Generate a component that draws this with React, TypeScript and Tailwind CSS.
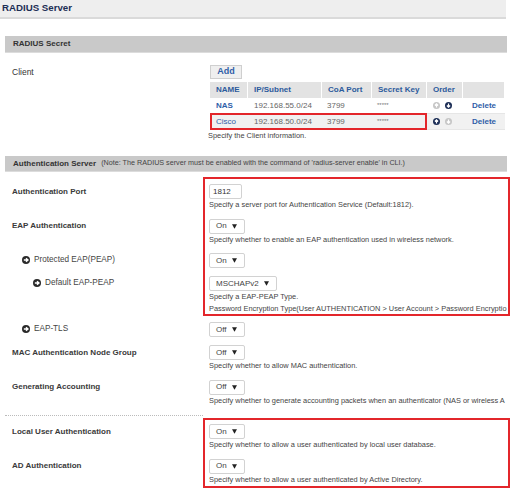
import React from "react";

type Dir = "up" | "down" | "right";

function CircleArrow({ dir, color, size = 7 }: { dir: Dir; color: string; size?: number }) {
  const d =
    dir === "down"
      ? "M5 2.2V7.4M2.7 5L5 7.4L7.3 5"
      : dir === "up"
      ? "M5 7.8V2.6M2.7 5L5 2.6L7.3 5"
      : "M2.3 5H7.5M5 2.7L7.5 5L5 7.3";
  return (
    <svg width={size} height={size} viewBox="0 0 10 10" className="shrink-0">
      <circle cx="5" cy="5" r="5" fill={color} />
      <path d={d} stroke="#fff" strokeWidth="1.7" fill="none" />
    </svg>
  );
}

function Caret() {
  return (
    <svg width="5" height="5" viewBox="0 0 10 9">
      <path d="M0 0H10L5 9Z" fill="#222" />
    </svg>
  );
}

function Select({ value, wide }: { value: string; wide?: boolean }) {
  return (
    <div
      className={`flex h-[15px] items-center justify-between rounded-[2px] border border-[#d2d2d2] bg-white pl-[6px] pr-[7px] text-[8px] text-[#444] ${
        wide ? "w-[68px]" : "w-[36px]"
      }`}
    >
      <span>{value}</span>
      <Caret />
    </div>
  );
}

type RowDef = {
  label: React.ReactNode;
  control: React.ReactNode;
  desc?: string[];
  rowCls: string;
};

function MainLabel({ text }: { text: string }) {
  return <span className="pl-[7px] text-[8px] font-bold text-[#3a3a3a]">{text}</span>;
}

function SubLabel({ text, indent }: { text: string; indent: "one" | "two" }) {
  return (
    <span
      className={`flex items-center gap-[4px] text-[8.2px] text-[#444] ${
        indent === "one" ? "pl-[17px]" : "pl-[28px]"
      }`}
    >
      <CircleArrow dir="right" color="#2a2a2a" size={8} />
      {text}
    </span>
  );
}

const rows: RowDef[] = [
  {
    rowCls: "row-start-1",
    label: <MainLabel text="Authentication Port" />,
    control: (
      <div className="flex h-[15px] w-[33px] items-center rounded-[2px] border border-[#d2d2d2] bg-white pl-[3px] text-[8px] text-[#333]">
        1812
      </div>
    ),
    desc: ["Specify a server port for Authentication Service (Default:1812)."],
  },
  {
    rowCls: "row-start-2",
    label: <MainLabel text="EAP Authentication" />,
    control: <Select value="On" />,
    desc: ["Specify whether to enable an EAP authentication used in wireless network."],
  },
  {
    rowCls: "row-start-3",
    label: <SubLabel text="Protected EAP(PEAP)" indent="one" />,
    control: <Select value="On" />,
  },
  {
    rowCls: "row-start-4",
    label: <SubLabel text="Default EAP-PEAP" indent="two" />,
    control: <Select value="MSCHAPv2" wide />,
    desc: [
      "Specify a EAP-PEAP Type.",
      "Password Encryption Type(User AUTHENTICATION > User Account > Password Encryptio",
    ],
  },
  {
    rowCls: "row-start-5",
    label: <SubLabel text="EAP-TLS" indent="one" />,
    control: <Select value="Off" />,
  },
  {
    rowCls: "row-start-6",
    label: <MainLabel text="MAC Authentication Node Group" />,
    control: <Select value="Off" />,
    desc: ["Specify whether to allow MAC authentication."],
  },
  {
    rowCls: "row-start-7",
    label: <MainLabel text="Generating Accounting" />,
    control: <Select value="Off" />,
    desc: ["Specify whether to generate accounting packets when an authenticator (NAS or wireless A"],
  },
  {
    rowCls: "row-start-9",
    label: <MainLabel text="Local User Authentication" />,
    control: <Select value="On" />,
    desc: ["Specify whether to allow a user authenticated by local user database."],
  },
  {
    rowCls: "row-start-10",
    label: <MainLabel text="AD Authentication" />,
    control: <Select value="On" />,
    desc: ["Specify whether to allow a user authenticated by Active Directory."],
  },
];

const clients = [
  { name: "NAS", ip: "192.168.55.0/24", port: "3799", first: true },
  { name: "Cisco", ip: "192.168.50.0/24", port: "3799", first: false },
];

export default function App() {
  return (
    <div className="h-[489px] w-[512px] overflow-hidden bg-white font-['Liberation_Sans',Arial,sans-serif]">
      {/* page title */}
      <div className="flex h-[19px] w-[506px] items-center border-b-2 border-[#dadada] bg-[#eeeeee] pl-[2px] text-[9.7px] font-bold text-[#1d2e55]">
        RADIUS Server
      </div>

      {/* RADIUS Secret */}
      <div className="mx-[5px] mt-[17px] flex h-[17px] items-center border-b border-[#dcdcdc] bg-[#c9c9c9] pl-[8px] text-[8px] font-bold text-[#333]">
        RADIUS Secret
      </div>

      <div className="ml-[5px] mt-[12px] flex">
        <div className="flex h-[14px] w-[198px] items-center pl-[7px] text-[8.5px] text-[#333]">Client</div>
        <div className="pl-[7px]">
          <div className="flex h-[14px] w-[32px] items-center justify-center border border-[#cfcfcf] bg-[#efefef] text-[9px] font-bold text-[#2f5ea8]">
            Add
          </div>
          <div className="mt-[3px] grid w-[295px] grid-cols-[38px_74px_50px_55px_36px_42px] text-[8px]">
            {["NAME", "IP/Subnet", "CoA Port", "Secret Key", "Order", ""].map((h, i) => (
              <div
                key={i}
                className="row-start-1 flex h-[16px] items-center border-r border-white bg-[#e3e3e3] pl-[6px] font-bold text-[#2c5a9c]"
              >
                {h}
              </div>
            ))}
            {clients.map((c, r) => {
              const rowCls = r === 0 ? "row-start-2" : "row-start-3";
              const bg = r === 0 ? "bg-white" : "bg-[#f1f1f1]";
              return (
                <React.Fragment key={c.name}>
                  <div
                    className={`${rowCls} ${bg} col-start-1 flex h-[16px] items-center border-b border-[#e6e6e6] pl-[6px] text-[#2f5ea8] ${
                      c.first ? "font-bold" : ""
                    }`}
                  >
                    {c.name}
                  </div>
                  <div className={`${rowCls} ${bg} col-start-2 flex items-center border-b border-[#e6e6e6] pl-[6px] text-[#666]`}>
                    {c.ip}
                  </div>
                  <div className={`${rowCls} ${bg} col-start-3 flex items-center border-b border-[#e6e6e6] pl-[5px] text-[#666]`}>
                    {c.port}
                  </div>
                  <div className={`${rowCls} ${bg} col-start-4 flex items-center border-b border-[#e6e6e6] pl-[5px] text-[6px] text-[#777]`}>
                    *****
                  </div>
                  <div className={`${rowCls} ${bg} col-start-5 flex items-center gap-[5px] border-b border-[#e6e6e6] pl-[6px]`}>
                    <CircleArrow dir="up" color={c.first ? "#c6c6c6" : "#1b2d55"} />
                    <CircleArrow dir="down" color={c.first ? "#1b2d55" : "#c6c6c6"} />
                  </div>
                  <div
                    className={`${rowCls} ${bg} col-start-6 flex items-center justify-center border-b border-[#e6e6e6] font-bold text-[#2f5ea8]`}
                  >
                    Delete
                  </div>
                </React.Fragment>
              );
            })}
            <div className="pointer-events-none col-start-1 col-span-4 row-start-3 -mt-[1px] border-2 border-[#e3262b]" />
          </div>
          <div className="-ml-[2px] whitespace-nowrap text-[7.4px] leading-[11px] text-[#444]">
            Specify the Client information.
          </div>
        </div>
      </div>

      {/* Authentication Server */}
      <div className="mx-[5px] mt-[15px] flex h-[16px] items-center gap-[5px] border-b border-[#dcdcdc] bg-[#c9c9c9] pl-[8px] text-[#333]">
        <span className="text-[8px] font-bold">Authentication Server</span>
        <span className="whitespace-nowrap text-[7.2px] text-[#444]">
          (Note: The RADIUS server must be enabled with the command of 'radius-server enable' in CLI.)
        </span>
      </div>

      <div className="ml-[5px] mt-[7px] grid w-[505px] grid-cols-[198px_307px]">
        {rows.map((r, i) => (
          <React.Fragment key={i}>
            <div className={`${r.rowCls} col-start-1 pb-[3px] pt-[5px]`}>
              <div className="flex h-[15px] items-center">{r.label}</div>
            </div>
            <div className={`${r.rowCls} col-start-2 mr-[2px] min-w-0 overflow-hidden pb-[3px] pl-[6px] pt-[5px]`}>
              {r.control}
              {r.desc?.map((d) => (
                <div key={d} className="whitespace-nowrap text-[7.4px] leading-[11.5px] text-[#444]">
                  {d}
                </div>
              ))}
            </div>
          </React.Fragment>
        ))}
        <div className="col-start-1 row-start-8 mb-[3px] mt-[6px] border-t border-dotted border-[#bbbbbb]" />
        <div className="pointer-events-none col-start-2 row-start-1 row-span-4 -mt-[2px] mb-[1px] border-2 border-[#e3262b]" />
        <div className="pointer-events-none col-start-2 row-start-9 row-span-2 -mt-[1px] border-2 border-[#e3262b]" />
      </div>
    </div>
  );
}
